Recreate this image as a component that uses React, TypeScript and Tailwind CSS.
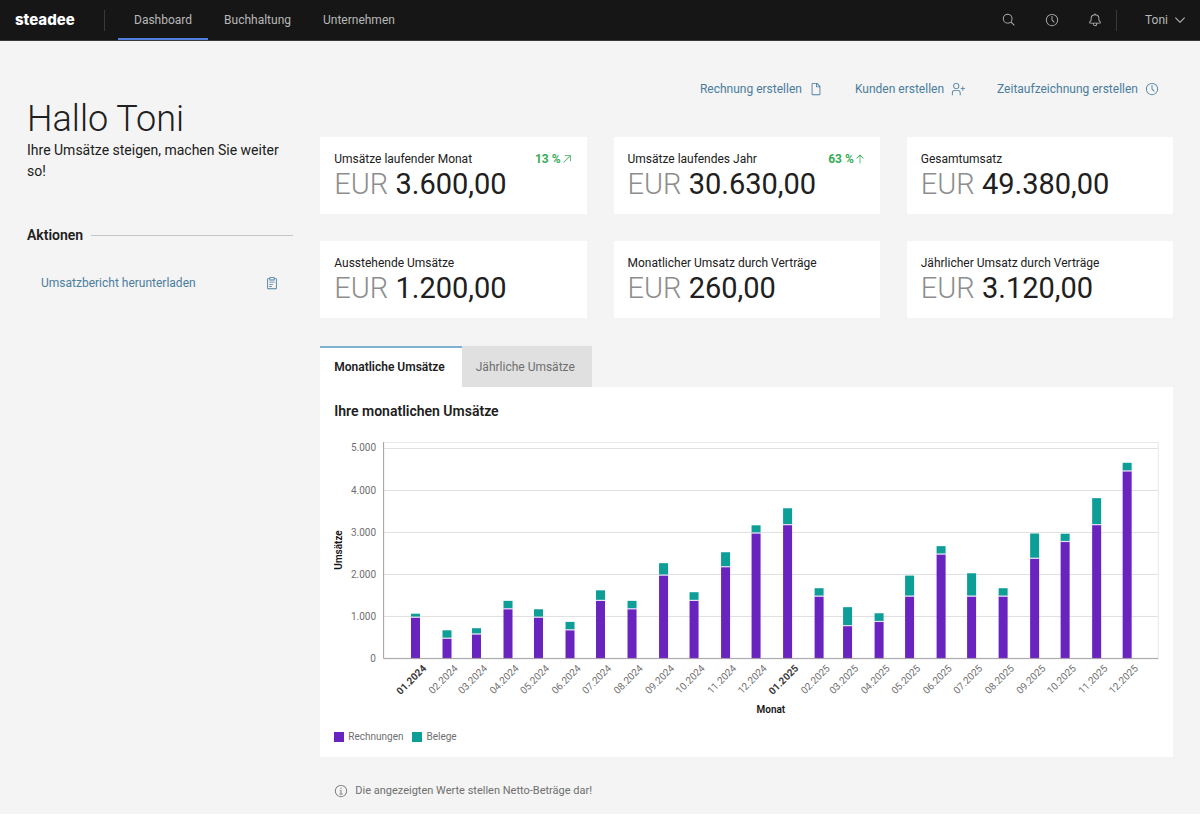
import { useState, type ReactNode } from "react";

function Icon({ className = "size-3.5", children }: { className?: string; children: ReactNode }) {
  return (
    <svg viewBox="0 0 32 32" fill="currentColor" aria-hidden="true" className={`shrink-0 ${className}`}>
      {children}
    </svg>
  );
}

const SearchIcon = () => (
  <Icon>
    <path d="M29,27.5859l-7.5521-7.5521a11.0177,11.0177,0,1,0-1.4141,1.4141L27.5859,29ZM4,13a9,9,0,1,1,9,9A9.01,9.01,0,0,1,4,13Z" />
  </Icon>
);

const TimeIcon = () => (
  <Icon>
    <path d="M16,30A14,14,0,1,1,30,16,14,14,0,0,1,16,30ZM16,4A12,12,0,1,0,28,16,12,12,0,0,0,16,4Z" />
    <path d="M20.59 22 15 16.41 15 7 17 7 17 15.58 22 20.59 20.59 22z" />
  </Icon>
);

const BellIcon = () => (
  <Icon>
    <path d="M28.7071,19.293,26,16.5859V13a10.0136,10.0136,0,0,0-9-9.9492V1H15V3.0508A10.0136,10.0136,0,0,0,6,13v3.5859L3.2929,19.293A1,1,0,0,0,3,20v3a1,1,0,0,0,1,1h7v.7768a5.152,5.152,0,0,0,4.5,5.1987A5.0057,5.0057,0,0,0,21,25V24h7a1,1,0,0,0,1-1V20A1,1,0,0,0,28.7071,19.293ZM19,25a3,3,0,0,1-6,0V24h6Zm8-3H5V20.4141L7.707,17.707A1,1,0,0,0,8,17V13a8,8,0,0,1,16,0v4a1,1,0,0,0,.293.707L27,20.4141Z" />
  </Icon>
);

const ChevronIcon = () => (
  <Icon className="size-4">
    <path d="M16 22 6 12 7.4 10.6 16 19.2 24.6 10.6 26 12z" />
  </Icon>
);

const DocumentIcon = () => (
  <Icon>
    <path d="M25.7,9.3l-7-7C18.5,2.1,18.3,2,18,2H8C6.9,2,6,2.9,6,4v24c0,1.1,0.9,2,2,2h16c1.1,0,2-0.9,2-2V10C26,9.7,25.9,9.5,25.7,9.3z M18,4.4l5.6,5.6H18V4.4z M24,28H8V4h8v6c0,1.1,0.9,2,2,2h6V28z" />
  </Icon>
);

const UserAddIcon = () => (
  <Icon>
    <path d="M32 14 28 14 28 10 26 10 26 14 22 14 22 16 26 16 26 20 28 20 28 16 32 16 32 14z" />
    <path d="M12,4A5,5,0,1,1,7,9a5,5,0,0,1,5-5m0-2a7,7,0,1,0,7,7A7,7,0,0,0,12,2Z" />
    <path d="M22,30H20V25a5,5,0,0,0-5-5H9a5,5,0,0,0-5,5v5H2V25a7,7,0,0,1,7-7h6a7,7,0,0,1,7,7Z" />
  </Icon>
);

const ReportIcon = () => (
  <Icon>
    <path d="M10 18H18V20H10z M10 13H22V15H10z M10 23H15V25H10z" />
    <path d="M25,5H22V4a2,2,0,0,0-2-2H12a2,2,0,0,0-2,2V5H7A2,2,0,0,0,5,7V28a2,2,0,0,0,2,2H25a2,2,0,0,0,2-2V7A2,2,0,0,0,25,5ZM12,4h8V8H12ZM25,28H7V7h3v3H22V7h3Z" />
  </Icon>
);

const InfoIcon = () => (
  <Icon>
    <path d="M17 22 17 14 13 14 13 16 15 16 15 22 12 22 12 24 20 24 20 22 17 22z" />
    <path d="M16,8a1.5,1.5,0,1,0,1.5,1.5A1.5,1.5,0,0,0,16,8Z" />
    <path d="M16,30A14,14,0,1,1,30,16,14,14,0,0,1,16,30ZM16,4A12,12,0,1,0,28,16,12,12,0,0,0,16,4Z" />
  </Icon>
);

const TrendRising = () => (
  <Icon className="size-3">
    <path d="M10 6 10 8 22.59 8 6 24.59 7.41 26 24 9.41 24 22 26 22 26 6 10 6z" />
  </Icon>
);

const TrendUp = () => (
  <Icon className="size-3">
    <path d="M16 4 6 14 7.41 15.41 15 7.83 15 28 17 28 17 7.83 24.59 15.41 26 14 16 4z" />
  </Icon>
);

type Stat = { label: string; value: string; trend?: string; icon?: ReactNode };

const stats: Stat[] = [
  { label: "Umsätze laufender Monat", value: "3.600,00", trend: "13 %", icon: <TrendRising /> },
  { label: "Umsätze laufendes Jahr", value: "30.630,00", trend: "63 %", icon: <TrendUp /> },
  { label: "Gesamtumsatz", value: "49.380,00" },
  { label: "Ausstehende Umsätze", value: "1.200,00" },
  { label: "Monatlicher Umsatz durch Verträge", value: "260,00" },
  { label: "Jährlicher Umsatz durch Verträge", value: "3.120,00" },
];

/* [invoices, total including receipts] per month, January 2024 to December 2025 */
const revenue = [
  [1000, 1075], [500, 680], [600, 730], [1200, 1380], [1000, 1180], [700, 880],
  [1400, 1630], [1200, 1380], [2000, 2275], [1400, 1585], [2200, 2535], [3000, 3175],
  [3200, 3580], [1500, 1680], [800, 1230], [900, 1085], [1500, 1980], [2500, 2680],
  [1500, 2035], [1500, 1680], [2400, 2980], [2800, 2975], [3200, 3820], [4475, 4660],
];

const DAY = 86400000;
const START = Date.UTC(2024, 0, 1);
const LEFT = 50;
const RIGHT = 824;
const BASE = 223;
const scaleX = (i: number) => 81.5 + ((Date.UTC(2024, i, 1) - START) / DAY) * 1.017;
const scaleY = (v: number) => BASE - v * 0.0421;

function RevenueChart() {
  return (
    <svg viewBox="0 0 825 284" role="img" aria-label="Ihre monatlichen Umsätze" className="block w-full">
      <rect x={LEFT} y="6.5" width={RIGHT - LEFT + 0.5} height={BASE - 6.5} fill="none" stroke="#e8e8e8" />
      {[0, 1000, 2000, 3000, 4000, 5000].map((v) => (
        <g key={v}>
          <line x1={LEFT} x2={RIGHT} y1={Math.round(scaleY(v)) - 0.5} y2={Math.round(scaleY(v)) - 0.5} stroke="#e0e0e0" />
          <text x="42" y={scaleY(v) + 3} textAnchor="end" fill="#6f6f6f" className="text-[10px]">
            {v.toLocaleString("de-DE")}
          </text>
        </g>
      ))}
      {revenue.map(([invoices, total], i) => {
        const x = scaleX(i);
        const first = i % 12 === 0;
        const label = `${String((i % 12) + 1).padStart(2, "0")}.${2024 + Math.floor(i / 12)}`;
        return (
          <g key={label}>
            <rect x={x - 4.5} y={scaleY(invoices)} width="9" height={BASE - scaleY(invoices)} fill="#6923be" />
            <rect x={x - 4.5} y={scaleY(total)} width="9" height={scaleY(invoices) - scaleY(total)} fill="#0e9e98" />
            <rect x={x - 5} y={scaleY(invoices) - 0.2} width="10" height="1.2" fill="#e6e0f5" />
            <text
              transform={`translate(${x + 11.5} 233) rotate(-45)`}
              textAnchor="end"
              fill={first ? "#393939" : "#6f6f6f"}
              className={first ? "text-[10px] font-bold" : "text-[10px]"}
            >
              {label}
            </text>
          </g>
        );
      })}
      <path d={`M${LEFT - 0.5} 6V${BASE - 0.5}H${RIGHT + 0.5}`} fill="none" stroke="#a8a8a8" />
      <text transform="translate(8 114) rotate(-90)" textAnchor="middle" fill="#161616" className="text-[10px] font-semibold">
        Umsätze
      </text>
      <text x="437" y="277" textAnchor="middle" fill="#161616" className="text-[10px] font-semibold">
        Monat
      </text>
    </svg>
  );
}

const navItems = ["Dashboard", "Buchhaltung", "Unternehmen"];
const tabs = ["Monatliche Umsätze", "Jährliche Umsätze"];

export default function App() {
  const [tab, setTab] = useState(0);

  return (
    <div className="bg-[#f4f4f4] font-[Roboto,sans-serif] text-[12px] leading-4 text-[#202020]">
      <header className="flex h-[41px] items-center border-b border-[#393939] bg-[#161616] text-[#b8b8b8]">
        <a href="#" className="w-[104px] pl-[15px] font-[Inter,sans-serif] text-[15px] font-extrabold text-white">
          steadee
        </a>
        <div className="mr-[13px] h-[21px] w-px bg-[#393939]" />
        <nav className="flex h-full">
          {navItems.map((item, i) => (
            <a
              key={item}
              href="#"
              className={
                i === 0
                  ? "flex items-center border-y-2 border-t-transparent border-b-[#4f7fe0] px-4"
                  : "flex items-center border-y-2 border-transparent px-4"
              }
            >
              {item}
            </a>
          ))}
        </nav>
        <div className="ml-auto flex h-full items-center">
          <button aria-label="Suche" className="flex h-full w-[42px] items-center justify-center">
            <SearchIcon />
          </button>
          <button aria-label="Zeiterfassung" className="flex h-full w-[43px] items-center justify-center">
            <TimeIcon />
          </button>
          <button aria-label="Benachrichtigungen" className="flex h-full w-[43px] items-center justify-center">
            <BellIcon />
          </button>
          <div className="h-[21px] w-px bg-[#393939]" />
          <button className="flex h-full w-[83px] items-center justify-end gap-1 pr-3">
            Toni
            <ChevronIcon />
          </button>
        </div>
      </header>

      <div className="grid grid-cols-4 gap-[27px] px-[27px]">
        <aside className="pt-[57px]">
          <h1 className="text-[36px] leading-[42px] font-light">Hallo Toni</h1>
          <p className="text-[14px] leading-[21px]">Ihre Umsätze steigen, machen Sie weiter so!</p>
          <div className="mt-[43px] flex items-center gap-2">
            <h2 className="text-[14px] leading-[21px] font-semibold">Aktionen</h2>
            <div className="h-px flex-1 bg-[#c6c6c6]" />
          </div>
          <a href="#" className="mt-[29px] flex items-center justify-between px-3.5 text-[#4a7d9d]">
            Umsatzbericht herunterladen
            <ReportIcon />
          </a>
        </aside>

        <main className="col-span-3 pb-[15px]">
          <div className="mt-10 mb-10 flex justify-end gap-8 pr-3.5 text-[#4a7d9d]">
            <a href="#" className="flex items-center gap-[7px]">
              Rechnung erstellen
              <DocumentIcon />
            </a>
            <a href="#" className="flex items-center gap-[7px]">
              Kunden erstellen
              <UserAddIcon />
            </a>
            <a href="#" className="flex items-center gap-[7px]">
              Zeitaufzeichnung erstellen
              <TimeIcon />
            </a>
          </div>

          <div className="grid grid-cols-3 gap-[27px]">
            {stats.map((s) => (
              <section key={s.label} className="bg-white px-3.5 pt-3.5 pb-[13px]">
                <div className="flex justify-between">
                  <h3>{s.label}</h3>
                  {s.trend && (
                    <span className="flex items-center font-bold text-[#35ab55]">
                      {s.trend}
                      {s.icon}
                    </span>
                  )}
                </div>
                <p className="text-[29px] leading-[34px]">
                  <span className="font-light text-[#8d8d8d]">EUR</span> {s.value}
                </p>
              </section>
            ))}
          </div>

          <div role="tablist" className="mt-7 flex">
            {tabs.map((t, i) => (
              <button
                key={t}
                role="tab"
                aria-selected={tab === i}
                onClick={() => setTab(i)}
                className={
                  tab === i
                    ? "h-[41px] border-t-2 border-[#7fb2d0] bg-white pr-[17px] pb-0.5 pl-3.5 font-semibold"
                    : "h-[41px] border-t-2 border-[#e0e0e0] bg-[#e0e0e0] pr-[17px] pb-0.5 pl-3.5 text-[#6f6f6f]"
                }
              >
                {t}
              </button>
            ))}
          </div>

          <section role="tabpanel" className="bg-white px-3.5 pt-3.5 pb-3">
            <h2 className="mb-3.5 text-[14px] leading-[21px] font-semibold">Ihre monatlichen Umsätze</h2>
            <RevenueChart />
            <ul className="mt-[9px] flex gap-[9px] text-[10px] text-[#6f6f6f]">
              <li className="flex items-center gap-1">
                <span className="size-[10px] bg-[#6923be]" />
                Rechnungen
              </li>
              <li className="flex items-center gap-1">
                <span className="size-[10px] bg-[#0e9e98]" />
                Belege
              </li>
            </ul>
          </section>

          <p className="mt-[26px] flex items-center gap-[7px] pl-3.5 text-[11px] text-[#6f6f6f]">
            <InfoIcon />
            Die angezeigten Werte stellen Netto-Beträge dar!
          </p>
        </main>
      </div>
    </div>
  );
}
